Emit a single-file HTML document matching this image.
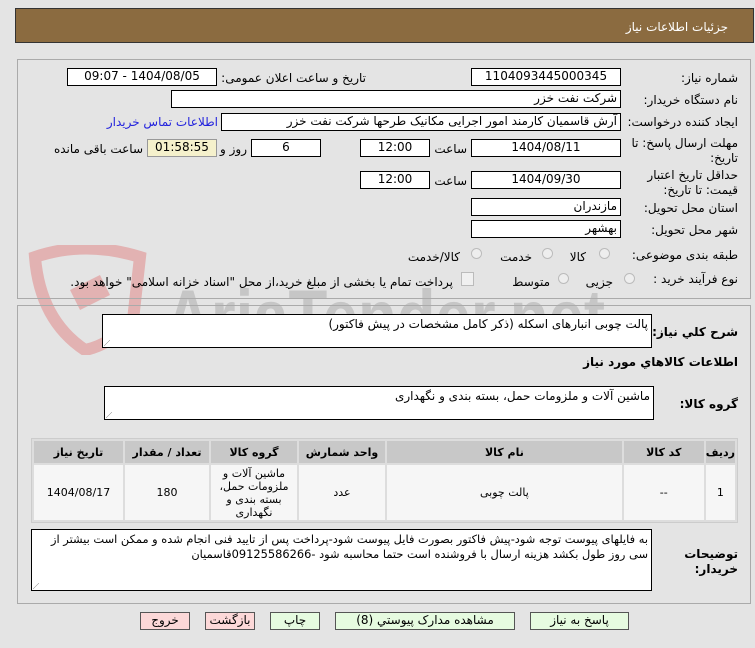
<!DOCTYPE html>
<html><head><meta charset="utf-8"><style>
body{margin:0;width:755px;height:648px;background:#e4e4e4;font-family:"DejaVu Sans","Liberation Sans",sans-serif;font-size:12px;color:#000;position:relative;overflow:hidden}
.a{position:absolute;white-space:nowrap}
.b{position:absolute;background:#fff;border:1px solid #000;box-sizing:border-box;direction:rtl;padding:0 3px;line-height:15px;font-size:12px;white-space:nowrap;overflow:hidden}
.c{text-align:center}
.l{position:absolute;direction:rtl;text-align:right;white-space:nowrap;font-size:12px;line-height:14px}
.p{position:absolute;border:1px solid #aaa;box-sizing:border-box}
.r{position:absolute;width:11px;height:11px;border-radius:50%;border:1px solid #bbb;background:#eee;box-sizing:border-box}
table{position:absolute;border-collapse:separate;border-spacing:2px;background:#ddd;border:1px solid #ccc;direction:rtl;font-size:11px}
th{background:#c8c8c8;height:22px;font-weight:bold;padding:0}
td{background:#f6f6f6;text-align:center;height:55px;padding:0;line-height:13px}
.btn{position:absolute;top:612px;height:18px;border:1px solid #555;box-sizing:border-box;text-align:center;line-height:15px;font-size:12px;background:#e6fbe0}
.rs{position:absolute;width:6px;height:6px;background:linear-gradient(135deg,transparent 45%,#888 50%,transparent 55%)}
</style></head><body>
<div class="a" style="left:15px;top:8px;width:739px;height:35px;background:#8b6b40;border:1px solid #333;box-sizing:border-box"></div>
<div class="l" style="right:27px;top:20px;color:#fff">جزئیات اطلاعات نیاز</div>

<!-- watermark -->
<svg class="a" style="left:15px;top:245px" width="600" height="110"><path d="M20 12 Q70 -5 125 12 L118 75 Q95 100 70 105 Q25 75 20 12Z" fill="none" stroke="#e2b2b2" stroke-width="12"/><path d="M55 45 L85 30 L95 50 L65 65Z" fill="#e2b2b2"/><text x="150" y="98" font-size="76" fill="#c6c6c6" font-family="Liberation Sans" font-weight="bold" textLength="440" lengthAdjust="spacingAndGlyphs">AriaTender.net</text></svg>

<div class="p" style="left:17px;top:59px;width:734px;height:240px"></div>
<div class="p" style="left:17px;top:305px;width:734px;height:299px"></div>

<div class="l" style="right:17px;top:71px">شماره نیاز:</div>
<div class="b c" style="left:471px;top:68px;width:150px;height:18px">1104093445000345</div>
<div class="l" style="right:389px;top:71px">تاریخ و ساعت اعلان عمومی:</div>
<div class="b c" style="left:67px;top:68px;width:150px;height:18px">1404/08/05 - 09:07</div>

<div class="l" style="right:17px;top:93px">نام دستگاه خریدار:</div>
<div class="b" style="left:171px;top:90px;width:450px;height:18px">شرکت نفت خزر</div>

<div class="l" style="right:17px;top:115px">ایجاد کننده درخواست:</div>
<div class="b" style="left:221px;top:113px;width:400px;height:18px">آرش قاسمیان کارمند امور اجرایی مکانیک طرحها شرکت نفت خزر</div>
<div class="l" style="right:537px;top:115px;color:#2222dd">اطلاعات تماس خریدار</div>

<div class="l" style="right:17px;top:136px;line-height:15px">مهلت ارسال پاسخ: تا<br>تاریخ:</div>
<div class="b c" style="left:471px;top:139px;width:150px;height:18px">1404/08/11</div>
<div class="l" style="right:288px;top:142px">ساعت</div>
<div class="b c" style="left:360px;top:139px;width:70px;height:18px">12:00</div>
<div class="b c" style="left:251px;top:139px;width:70px;height:18px">6</div>
<div class="l" style="right:508px;top:142px">روز و</div>
<div class="b c" style="left:147px;top:139px;width:70px;height:18px;background:#f5f1cc;border-color:#999">01:58:55</div>
<div class="l" style="right:612px;top:142px">ساعت باقی مانده</div>

<div class="l" style="right:17px;top:168px;line-height:15px">حداقل تاریخ اعتبار<br>قیمت: تا تاریخ:</div>
<div class="b c" style="left:471px;top:171px;width:150px;height:18px">1404/09/30</div>
<div class="l" style="right:288px;top:174px">ساعت</div>
<div class="b c" style="left:360px;top:171px;width:70px;height:18px">12:00</div>

<div class="l" style="right:17px;top:201px">استان محل تحویل:</div>
<div class="b" style="left:471px;top:198px;width:150px;height:18px">مازندران</div>
<div class="l" style="right:17px;top:223px">شهر محل تحویل:</div>
<div class="b" style="left:471px;top:220px;width:150px;height:18px">بهشهر</div>

<div class="l" style="right:17px;top:248px">طبقه بندی موضوعی:</div>
<div class="r" style="left:599px;top:248px"></div><div class="l" style="right:169px;top:250px">کالا</div>
<div class="r" style="left:542px;top:248px"></div><div class="l" style="right:223px;top:250px">خدمت</div>
<div class="r" style="left:471px;top:248px"></div><div class="l" style="right:295px;top:250px">کالا/خدمت</div>

<div class="l" style="right:17px;top:272px">نوع فرآیند خرید :</div>
<div class="r" style="left:624px;top:273px"></div><div class="l" style="right:142px;top:275px">جزیی</div>
<div class="r" style="left:558px;top:273px"></div><div class="l" style="right:205px;top:275px">متوسط</div>
<div class="a" style="left:461px;top:272px;width:11px;height:12px;border:1px solid #bbb;background:#f0f0f0"></div>
<div class="l" style="right:302px;top:275px">پرداخت تمام یا بخشی از مبلغ خرید،از محل "اسناد خزانه اسلامی" خواهد بود.</div>

<div class="l" style="right:17px;top:325px;font-weight:bold">شرح کلي نیاز:</div>
<div class="b" style="left:102px;top:314px;width:550px;height:34px;padding-top:2px">پالت چوبی انبارهای اسکله (ذکر کامل مشخصات در پیش فاکتور)</div>
<div class="rs" style="left:104px;top:340px"></div>
<div class="l" style="right:17px;top:355px;font-weight:bold">اطلاعات کالاهاي مورد نیاز</div>
<div class="l" style="right:17px;top:397px;font-weight:bold">گروه کالا:</div>
<div class="b" style="left:104px;top:386px;width:550px;height:34px;padding-top:2px">ماشین آلات و ملزومات حمل، بسته بندی و نگهداری</div>
<div class="rs" style="left:106px;top:412px"></div>

<table style="left:31px;top:438px;width:707px">
<tr><th style="width:28px">ردیف</th><th style="width:80px">کد کالا</th><th>نام کالا</th><th style="width:86px">واحد شمارش</th><th style="width:86px">گروه کالا</th><th style="width:84px">تعداد / مقدار</th><th style="width:89px">تاریخ نیاز</th></tr>
<tr><td>1</td><td>--</td><td>پالت چوبی</td><td>عدد</td><td>ماشین آلات و<br>ملزومات حمل،<br>بسته بندی و<br>نگهداری</td><td>180</td><td>1404/08/17</td></tr>
</table>

<div class="l" style="right:17px;top:547px;font-weight:bold;line-height:15px">توضیحات<br>خریدار:</div>
<div class="b" style="left:31px;top:529px;width:621px;height:62px;white-space:normal;padding-top:2px;font-size:11.4px">به فایلهای پیوست توجه شود-پیش فاکتور بصورت فایل پیوست شود-پرداخت پس از تایید فنی انجام شده و ممکن است بیشتر از سی روز طول بکشد هزینه ارسال با فروشنده است حتما محاسبه شود -09125586266قاسمیان</div>
<div class="rs" style="left:33px;top:583px"></div>

<div class="btn" style="left:140px;width:50px;background:#fcd8d8">خروج</div>
<div class="btn" style="left:205px;width:50px;background:#fcd8d8">بازگشت</div>
<div class="btn" style="left:270px;width:50px">چاپ</div>
<div class="btn" style="left:335px;width:180px">مشاهده مدارک پیوستي (8)</div>
<div class="btn" style="left:530px;width:99px">پاسخ به نیاز</div>
</body></html>
